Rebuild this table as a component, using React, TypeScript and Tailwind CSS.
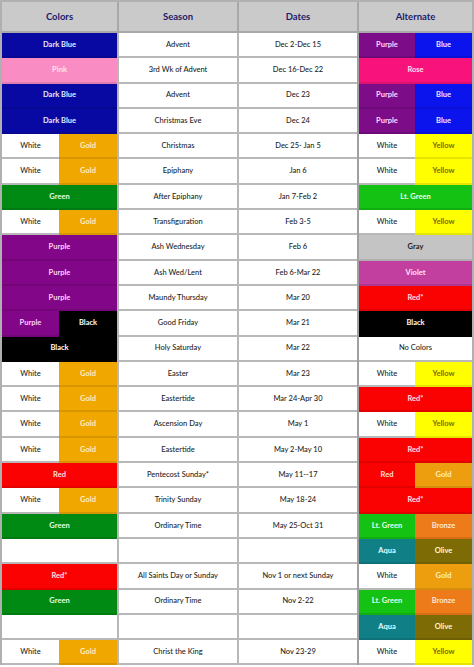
type Swatch = { label: string; bg: string; fg: string }

const C: Record<string, Swatch> = {
  darkBlue: { label: 'Dark Blue', bg: 'bg-[#0808a2]', fg: 'text-[#e8e8ff]' },
  pink: { label: 'Pink', bg: 'bg-[#fa8cc4]', fg: 'text-[#ffe4f2]' },
  white: { label: 'White', bg: 'bg-white', fg: 'text-[#1e1e1e]' },
  gold: { label: 'Gold', bg: 'bg-[#f0a800]', fg: 'text-[#ffeec0]' },
  green: { label: 'Green', bg: 'bg-[#008a14]', fg: 'text-[#e0ffe0]' },
  purple: { label: 'Purple', bg: 'bg-[#820788]', fg: 'text-[#ffd0ff]' },
  black: { label: 'Black', bg: 'bg-black', fg: 'text-white' },
  red: { label: 'Red', bg: 'bg-[#fa0202]', fg: 'text-[#ffe0e0]' },
  redStar: { label: 'Red*', bg: 'bg-[#fa0202]', fg: 'text-[#ffe0e0]' },
  blank: { label: '', bg: 'bg-white', fg: 'text-[#1e1e1e]' },
  // alternate column
  altPurple: { label: 'Purple', bg: 'bg-[#7c0c88]', fg: 'text-[#ffd8ff]' },
  blue: { label: 'Blue', bg: 'bg-[#0c14ee]', fg: 'text-[#e8e8ff]' },
  rose: { label: 'Rose', bg: 'bg-[#f8137c]', fg: 'text-[#ffe0f0]' },
  yellow: { label: 'Yellow', bg: 'bg-[#ffff00]', fg: 'text-[#7a6c00]' },
  ltGreen: { label: 'Lt. Green', bg: 'bg-[#14c214]', fg: 'text-[#eaffea]' },
  gray: { label: 'Gray', bg: 'bg-[#c4c4c4]', fg: 'text-[#1e1e1e]' },
  violet: { label: 'Violet', bg: 'bg-[#c23fa0]', fg: 'text-[#ffe4ff]' },
  noColors: { label: 'No Colors', bg: 'bg-white', fg: 'text-[#1e1e1e]' },
  altGold: { label: 'Gold', bg: 'bg-[#ec9e0e]', fg: 'text-[#ffeec0]' },
  bronze: { label: 'Bronze', bg: 'bg-[#ee7b1a]', fg: 'text-[#ffe8d0]' },
  aqua: { label: 'Aqua', bg: 'bg-[#117f86]', fg: 'text-[#e0ffff]' },
  olive: { label: 'Olive', bg: 'bg-[#7d6b05]', fg: 'text-[#fff8d0]' },
}

type Row = { colors: Swatch[]; season: string; dates: string; alt: Swatch[] }

const ROWS: Row[] = [
  { colors: [C.darkBlue], season: 'Advent', dates: 'Dec 2-Dec 15', alt: [C.altPurple, C.blue] },
  { colors: [C.pink], season: '3rd Wk of Advent', dates: 'Dec 16-Dec 22', alt: [C.rose] },
  { colors: [C.darkBlue], season: 'Advent', dates: 'Dec 23', alt: [C.altPurple, C.blue] },
  { colors: [C.darkBlue], season: 'Christmas Eve', dates: 'Dec 24', alt: [C.altPurple, C.blue] },
  { colors: [C.white, C.gold], season: 'Christmas', dates: 'Dec 25- Jan 5', alt: [C.white, C.yellow] },
  { colors: [C.white, C.gold], season: 'Epiphany', dates: 'Jan 6', alt: [C.white, C.yellow] },
  { colors: [C.green], season: 'After Epiphany', dates: 'Jan 7-Feb 2', alt: [C.ltGreen] },
  { colors: [C.white, C.gold], season: 'Transfiguration', dates: 'Feb 3-5', alt: [C.white, C.yellow] },
  { colors: [C.purple], season: 'Ash Wednesday', dates: 'Feb 6', alt: [C.gray] },
  { colors: [C.purple], season: 'Ash Wed/Lent', dates: 'Feb 6-Mar 22', alt: [C.violet] },
  { colors: [C.purple], season: 'Maundy Thursday', dates: 'Mar 20', alt: [C.redStar] },
  { colors: [C.purple, C.black], season: 'Good Friday', dates: 'Mar 21', alt: [C.black] },
  { colors: [C.black], season: 'Holy Saturday', dates: 'Mar 22', alt: [C.noColors] },
  { colors: [C.white, C.gold], season: 'Easter', dates: 'Mar 23', alt: [C.white, C.yellow] },
  { colors: [C.white, C.gold], season: 'Eastertide', dates: 'Mar 24-Apr 30', alt: [C.redStar] },
  { colors: [C.white, C.gold], season: 'Ascension Day', dates: 'May 1', alt: [C.white, C.yellow] },
  { colors: [C.white, C.gold], season: 'Eastertide', dates: 'May 2-May 10', alt: [C.redStar] },
  { colors: [C.red], season: 'Pentecost Sunday*', dates: 'May 11--17', alt: [C.red, C.altGold] },
  { colors: [C.white, C.gold], season: 'Trinity Sunday', dates: 'May 18-24', alt: [C.redStar] },
  { colors: [C.green], season: 'Ordinary Time', dates: 'May 25-Oct 31', alt: [C.ltGreen, C.bronze] },
  { colors: [C.blank], season: '', dates: '', alt: [C.aqua, C.olive] },
  { colors: [C.redStar], season: 'All Saints Day or Sunday', dates: 'Nov 1 or next Sunday', alt: [C.white, C.altGold] },
  { colors: [C.green], season: 'Ordinary Time', dates: 'Nov 2-22', alt: [C.ltGreen, C.bronze] },
  { colors: [C.blank], season: '', dates: '', alt: [C.aqua, C.olive] },
  { colors: [C.white, C.gold], season: 'Christ the King', dates: 'Nov 23-29', alt: [C.white, C.yellow] },
]

function isLight(s: Swatch) {
  return s.bg === 'bg-white'
}

function SwatchCells({ items, split }: { items: Swatch[]; split: string }) {
  if (items.length === 1) {
    let s = items[0]
    return (
      <div
        className={`flex flex-1 items-center justify-center border-b-2 ${s.bg} ${s.fg} ${
          isLight(s) ? 'border-[#b8b8b8] font-medium' : 'border-black/10 font-bold'
        }`}
      >
        {s.label}
      </div>
    )
  }
  return (
    <div className="flex flex-1">
      {items.map((s, i) => (
        <div
          key={i}
          className={`flex items-center justify-center border-b-2 ${i === 0 ? split : 'flex-1'} ${s.bg} ${s.fg} ${
            isLight(s) ? 'border-[#b8b8b8] font-medium' : 'border-black/10 font-bold'
          }`}
        >
          {s.label}
        </div>
      ))}
    </div>
  )
}

function TextCell({ text }: { text: string }) {
  return (
    <div className="flex w-[120px] items-center justify-center border-b-2 border-l-2 border-[#b8b8b8] bg-white font-medium text-[#1e1e1e]">
      {text}
    </div>
  )
}

export default function App() {
  return (
    <div
      className="w-[474px] bg-white text-[7.5px] leading-none"
      style={{ fontFamily: 'Lato, "Open Sans", sans-serif' }}
    >
      <div className="border-x-2 border-t-2 border-[#b0b0b0]">
        <div className="flex h-[31px] border-b-2 border-[#a8a8a8] bg-[#cacaca] text-[9.5px] font-bold text-[#1c1c6c]">
          <div className="flex w-[115px] items-center justify-center">Colors</div>
          <div className="flex w-[120px] items-center justify-center border-l-2 border-[#a8a8a8]">Season</div>
          <div className="flex w-[120px] items-center justify-center border-l-2 border-[#a8a8a8]">Dates</div>
          <div className="flex flex-1 items-center justify-center border-l-2 border-[#a8a8a8]">Alternate</div>
        </div>
        {ROWS.map((r, i) => (
          <div key={i} className="flex h-[25.3px]">
            <div className="flex w-[115px]">
              <SwatchCells items={r.colors} split="w-[57px]" />
            </div>
            <TextCell text={r.season} />
            <TextCell text={r.dates} />
            <div className="flex flex-1 border-l-2 border-[#a0a0a0]">
              <SwatchCells items={r.alt} split="w-[56px]" />
            </div>
          </div>
        ))}
      </div>
    </div>
  )
}
